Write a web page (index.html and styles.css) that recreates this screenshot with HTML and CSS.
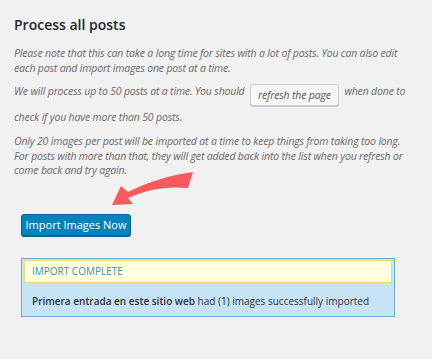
FILE: index.html
```html
<!DOCTYPE html>
<html>
<head>
<meta charset="utf-8">
<link rel="stylesheet" href="styles.css">
</head>
<body>
<div class="wrap">
  <h2 class="title">Process all posts</h2>
  <p class="desc p1">Please note that this can take a long time for sites with a lot of posts. You can also edit<br>each post and import images one post at a time.</p>
  <p class="desc p2">We will process up to 50 posts at a time. You should <span class="btn">refresh the page</span> when done to<br>check if you have more than 50 posts.</p>
  <p class="desc p3">Only 20 images per post will be imported at a time to keep things from taking too long.<br>For posts with more than that, they will get added back into the list when you refresh or<br>come back and try again.</p>
  <div class="action">
    <svg class="arrow" width="200" height="60" viewBox="0 0 200 60" aria-hidden="true">
      <path d="M179 12 C156 15 134 22 114 32 L107 26 L98 45 L119 44 L114 38 C134 29 154 26 174 28 Z" fill="#f65a5a"/>
    </svg>
    <button class="primary">Import Images Now</button>
  </div>
  <div class="notice">
    <div class="notice-head">IMPORT COMPLETE</div>
    <div class="notice-body"><b>Primera entrada en este sitio web</b> had (1) images successfully imported</div>
  </div>
</div>
</body>
</html>
```
FILE: styles.css
```css
html, body {
  margin: 0;
  padding: 0;
  background: #f1f1f1;
}
body {
  font-family: "Open Sans", "Noto Sans", sans-serif;
  color: #444;
}
.wrap {
  padding: 15px 0 0 14px;
  width: 410px;
}
.title {
  margin: 0 0 11px 0;
  font-size: 14px;
  font-weight: 600;
  color: #23282d;
  line-height: 20px;
}
.desc {
  margin: 0;
  font-size: 10.5px;
  font-style: italic;
  color: #6a6a6a;
  line-height: 15px;
  letter-spacing: -0.17px;
  white-space: nowrap;
}
.p1 {
  margin-bottom: 4px;
}
.p2 {
  line-height: 22px;
  margin-bottom: 6px;
}
.p3 {
  line-height: 14.5px;
}
.btn {
  display: inline-block;
  box-sizing: border-box;
  height: 22px;
  line-height: 20px;
  padding: 0 7px;
  border: 1px solid #ccc;
  border-radius: 3px;
  background: #f7f7f7;
  box-shadow: 0 1px 0 #ccc;
  color: #555;
  font-style: italic;
  vertical-align: -4px;
  margin: 0 3px;
}
.action {
  position: relative;
  padding-top: 36px;
  padding-left: 7px;
}
.arrow {
  position: absolute;
  left: 0;
  top: -18px;
}
.primary {
  display: block;
  box-sizing: border-box;
  height: 22px;
  width: 110px;
  padding: 0;
  margin: 0;
  border: 1px solid #006799;
  border-radius: 3px;
  background: #0085ba;
  box-shadow: 0 1px 0 #006799;
  color: #fff;
  font-family: "Open Sans", sans-serif;
  font-size: 11px;
  line-height: 20px;
}
.notice {
  margin: 22px 0 0 7px;
  width: 374px;
  box-sizing: border-box;
  border: 1px solid #6aa9d6;
  background: #c6e4f6;
  padding: 1px 2px 0 2px;
  height: 59px;
}
.notice-head {
  box-sizing: border-box;
  height: 23px;
  background: #ffffe0;
  border: 1px solid #e8dc6c;
  color: #3a8cbf;
  font-size: 10px;
  line-height: 21px;
  padding-left: 7px;
}
.notice-body {
  font-size: 10px;
  color: #333;
  padding: 10px 0 0 8px;
  line-height: 16px;
}
.notice-body b {
  font-weight: 600;
}
```
